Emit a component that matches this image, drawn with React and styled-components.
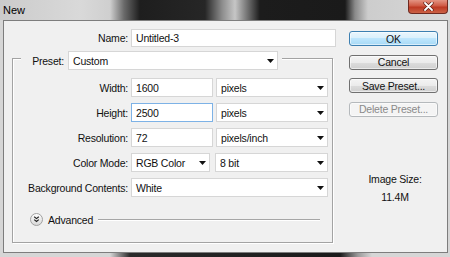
import React from "react";
import styled, { createGlobalStyle } from "styled-components";

const Global = createGlobalStyle`
  html, body { margin: 0; padding: 0; background: #d4d4d4; }
  body {
    font-family: "Liberation Sans", Arial, sans-serif;
    font-size: 10.5px;
    letter-spacing: -0.2px;
    color: #111;
  }
  #root { width: 450px; height: 257px; }
`;

const Window = styled.div`
  width: 450px;
  height: 257px;
  display: flex;
  flex-direction: column;
  background: #d6d6d6;
  overflow: hidden;
`;

const TitleBar = styled.div`
  height: 20px;
  flex: none;
  display: flex;
  justify-content: space-between;
  align-items: flex-start;
  background: linear-gradient(
    90deg,
    #cbcbcb 0px,
    #d9d9d9 80px,
    #cfcfcf 110px,
    #6a6a6a 124px,
    #1e1e1e 140px,
    #262626 205px,
    #8c8c8c 222px,
    #c6c6c6 235px,
    #6e6e6e 248px,
    #1c1c1c 260px,
    #1a1a1a 345px,
    #8a8a8a 355px,
    #cdcdcd 368px,
    #d8d8d8 450px
  );
`;

const Title = styled.div`
  margin: 4px 0 0 3px;
  font-size: 11px;
  line-height: 12px;
  letter-spacing: 0;
  color: #000;
`;

const CloseButton = styled.div`
  width: 40px;
  height: 14px;
  margin-right: 2px;
  box-sizing: border-box;
  border: 1px solid #6e2a20;
  border-top: none;
  border-radius: 0 0 4px 4px;
  background: linear-gradient(#e39483, #cf5a44 45%, #bd3923 55%, #cc6246);
  display: flex;
  align-items: center;
  justify-content: center;
`;

const Client = styled.div`
  flex: 1;
  margin: 0 2px 0 3px;
  border: 1px solid #7d7d7d;
  background: #f0f0f0;
  display: flex;
`;

const BottomFrame = styled.div`
  height: 4px;
  flex: none;
  background: linear-gradient(
    90deg,
    #d6d6d6 0px,
    #d6d6d6 110px,
    #2a2a2a 130px,
    #1a1a1a 340px,
    #9a9a9a 358px,
    #d6d6d6 372px
  );
`;

const FormPane = styled.div`
  width: 332px;
  flex: none;
  padding-top: 8px;
  display: flex;
  flex-direction: column;
`;

const Row = styled.div`
  display: flex;
  align-items: center;
  height: ${(p) => p.$h || 19}px;
`;

const Label = styled.div`
  width: ${(p) => p.$w}px;
  flex: none;
  text-align: right;
  white-space: nowrap;
  margin-right: ${(p) => (p.$mr === undefined ? 3 : p.$mr)}px;
`;

const TextField = styled.div`
  width: ${(p) => p.$w}px;
  height: ${(p) => p.$h || 19}px;
  flex: none;
  box-sizing: border-box;
  border: 1px solid ${(p) => (p.$focused ? "#7db2e6" : "#d6d6d6")};
  background: #fff;
  padding: 0 4px;
  display: flex;
  align-items: center;
  margin-left: ${(p) => p.$ml || 0}px;
`;

const SelectBox = styled.div`
  width: ${(p) => p.$w}px;
  height: 19px;
  flex: none;
  box-sizing: border-box;
  border: 1px solid #d6d6d6;
  background: #fff;
  padding: 0 3px 0 4px;
  display: flex;
  align-items: center;
  justify-content: space-between;
  margin-left: ${(p) => p.$ml || 0}px;
`;

const Group = styled.div`
  margin: 11px 0 0 8px;
  width: 321px;
  box-sizing: border-box;
  border: 1px solid #a3a3a3;
  box-shadow: inset 1px 1px 0 #fff, 1px 1px 0 #fff;
  padding-bottom: 16px;
  display: flex;
  flex-direction: column;
`;

const GroupHeader = styled.div`
  margin: -8px 0 0 8px;
  align-self: flex-start;
  display: flex;
  align-items: center;
  padding: 0 4px 0 8px;
  background: #f0f0f0;
`;

const Rows = styled.div`
  margin-top: 8px;
  display: flex;
  flex-direction: column;
  gap: 6px;
`;

const AdvancedRow = styled.div`
  margin-top: 16px;
  height: 13px;
  display: flex;
  align-items: center;
  padding-left: 17px;
`;

const AdvancedText = styled.span`
  margin-left: 5px;
`;

const Rule = styled.div`
  flex: 1;
  height: 1px;
  background: #a6a6a6;
  box-shadow: 0 1px 0 #fff;
  margin: 0 12px 0 5px;
`;

const SidePane = styled.div`
  width: 89px;
  padding: 10px 0 0 13px;
  display: flex;
  flex-direction: column;
`;

const Button = styled.div`
  height: 15px;
  box-sizing: border-box;
  margin-bottom: 8.5px;
  border-radius: 3px;
  display: flex;
  align-items: center;
  justify-content: center;
  white-space: nowrap;
  border: 1px solid
    ${(p) => (p.$variant === "default" ? "#3c7fb1" : p.$variant === "disabled" ? "#b5b9bc" : "#707070")};
  color: ${(p) => (p.$variant === "disabled" ? "#8a8a8a" : "#111")};
  background: ${(p) =>
    p.$variant === "default"
      ? "linear-gradient(#eaf6fd, #d9f0fc 50%, #bee6fd 50%, #a7d9f5)"
      : p.$variant === "disabled"
      ? "#f4f4f4"
      : "linear-gradient(#f4f4f4, #ebebeb 50%, #dddddd 50%, #cfcfcf)"};
  box-shadow: inset 0 0 0 1px rgba(255, 255, 255, 0.55);
`;

const SizeBlock = styled.div`
  margin-top: 48px;
  display: flex;
  flex-direction: column;
  align-items: center;
  gap: 5px;
  line-height: 13px;
  padding-left: 3px;
`;

const Arrow = () => (
  <svg width="7" height="4" viewBox="0 0 7 4">
    <path d="M0 0H7L3.5 4Z" fill="#111" />
  </svg>
);

const Select = ({ w, ml, children }) => (
  <SelectBox $w={w} $ml={ml}>
    <span>{children}</span>
    <Arrow />
  </SelectBox>
);

const AdvancedIcon = () => (
  <svg width="13" height="13" viewBox="0 0 13 13">
    <defs>
      <linearGradient id="advg" x1="0" y1="0" x2="0" y2="1">
        <stop offset="0" stopColor="#ffffff" />
        <stop offset="1" stopColor="#d6d6d6" />
      </linearGradient>
    </defs>
    <circle cx="6.5" cy="6.5" r="6" fill="url(#advg)" stroke="#a0a0a0" />
    <path d="M4.2 3.8L6.5 5.6L8.8 3.8M4.2 6.6L6.5 8.4L8.8 6.6" fill="none" stroke="#222" strokeWidth="1.2" />
  </svg>
);

const CloseGlyph = () => (
  <svg width="11" height="9" viewBox="0 0 11 9">
    <path d="M2 1L9 8M9 1L2 8" stroke="#5a1d14" strokeWidth="3.2" strokeLinecap="round" />
    <path d="M2 1L9 8M9 1L2 8" stroke="#fff" strokeWidth="1.8" strokeLinecap="round" />
  </svg>
);

export default function App() {
  return (
    <>
      <Global />
      <Window>
        <TitleBar>
          <Title>New</Title>
          <CloseButton>
            <CloseGlyph />
          </CloseButton>
        </TitleBar>
        <Client>
          <FormPane>
            <Row $h={18}>
              <Label $w={124}>Name:</Label>
              <TextField $w={205} $h={18}>Untitled-3</TextField>
            </Row>
            <Group>
              <GroupHeader>
                <Label $w={35} $mr={4}>Preset:</Label>
                <Select w={210}>Custom</Select>
              </GroupHeader>
              <Rows>
                <Row>
                  <Label $w={115}>Width:</Label>
                  <TextField $w={82}>1600</TextField>
                  <Select w={112} ml={3}>pixels</Select>
                </Row>
                <Row>
                  <Label $w={115}>Height:</Label>
                  <TextField $w={82} $focused>2500</TextField>
                  <Select w={112} ml={3}>pixels</Select>
                </Row>
                <Row>
                  <Label $w={115}>Resolution:</Label>
                  <TextField $w={82}>72</TextField>
                  <Select w={112} ml={3}>pixels/inch</Select>
                </Row>
                <Row>
                  <Label $w={115}>Color Mode:</Label>
                  <Select w={79}>RGB Color</Select>
                  <Select w={113} ml={5}>8 bit</Select>
                </Row>
                <Row>
                  <Label $w={115}>Background Contents:</Label>
                  <Select w={197}>White</Select>
                </Row>
              </Rows>
              <AdvancedRow>
                <AdvancedIcon />
                <AdvancedText>Advanced</AdvancedText>
                <Rule />
              </AdvancedRow>
            </Group>
          </FormPane>
          <SidePane>
            <Button $variant="default">OK</Button>
            <Button>Cancel</Button>
            <Button>Save Preset...</Button>
            <Button $variant="disabled">Delete Preset...</Button>
            <SizeBlock>
              <span>Image Size:</span>
              <span>11.4M</span>
            </SizeBlock>
          </SidePane>
        </Client>
        <BottomFrame />
      </Window>
    </>
  );
}
